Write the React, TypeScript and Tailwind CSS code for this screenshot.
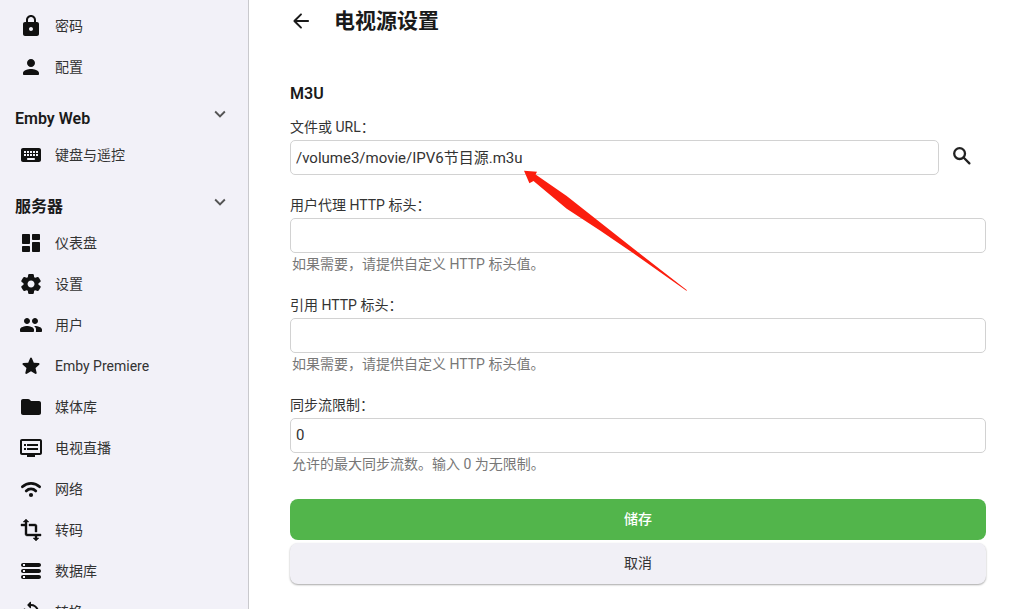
import type { ReactNode } from "react";
import { MdDvr, MdExpandMore } from "react-icons/md";

function Glyph({ children }: { children: ReactNode }) {
  return (
    <svg viewBox="0 0 24 24" className="size-6 shrink-0 fill-current" aria-hidden="true">
      {children}
    </svg>
  );
}

const syncArc =
  "M12 4V2.21c0-.45-.54-.67-.85-.35l-2.8 2.79c-.2.2-.2.51 0 .71l2.79 2.79c.32.31.86.09.86-.36V6c3.31 0 6 2.69 6 6 0 .79-.15 1.56-.44 2.25-.15.36-.04.77.23 1.04.51.51 1.37.33 1.64-.34.37-.91.57-1.91.57-2.95 0-4.42-3.58-8-8-8z";

const icons = {
  lock: <path d="M18 8h-1V6c0-2.76-2.24-5-5-5S7 3.24 7 6v2H6c-1.1 0-2 .9-2 2v10c0 1.1.9 2 2 2h12c1.1 0 2-.9 2-2V10c0-1.1-.9-2-2-2zm-6 9c-1.1 0-2-.9-2-2s.9-2 2-2 2 .9 2 2-.9 2-2 2zM9 8V6c0-1.66 1.34-3 3-3s3 1.34 3 3v2H9z" />,
  person: <path d="M12 12c2.21 0 4-1.79 4-4s-1.79-4-4-4-4 1.79-4 4 1.79 4 4 4zm0 2c-2.67 0-8 1.34-8 4v1c0 .55.45 1 1 1h14c.55 0 1-.45 1-1v-1c0-2.66-5.33-4-8-4z" />,
  keyboard: <path d="M20 5H4c-1.1 0-1.99.9-1.99 2L2 17c0 1.1.9 2 2 2h16c1.1 0 2-.9 2-2V7c0-1.1-.9-2-2-2zm-9 3h2v2h-2V8zm0 3h2v2h-2v-2zM8 8h2v2H8V8zm0 3h2v2H8v-2zm-1 2H5v-2h2v2zm0-3H5V8h2v2zm8 7H9c-.55 0-1-.45-1-1s.45-1 1-1h6c.55 0 1 .45 1 1s-.45 1-1 1zm1-4h-2v-2h2v2zm0-3h-2V8h2v2zm3 3h-2v-2h2v2zm0-3h-2V8h2v2z" />,
  dashboard: <path d="M4 13h6c.55 0 1-.45 1-1V4c0-.55-.45-1-1-1H4c-.55 0-1 .45-1 1v8c0 .55.45 1 1 1zm0 8h6c.55 0 1-.45 1-1v-4c0-.55-.45-1-1-1H4c-.55 0-1 .45-1 1v4c0 .55.45 1 1 1zm10 0h6c.55 0 1-.45 1-1v-8c0-.55-.45-1-1-1h-6c-.55 0-1 .45-1 1v8c0 .55.45 1 1 1zM13 4v4c0 .55.45 1 1 1h6c.55 0 1-.45 1-1V4c0-.55-.45-1-1-1h-6c-.55 0-1 .45-1 1z" />,
  settings: <path d="M19.5 12c0-.23-.01-.45-.03-.68l1.86-1.41c.4-.3.51-.86.26-1.3l-1.87-3.23c-.25-.44-.79-.62-1.25-.42l-2.15.91c-.37-.26-.76-.49-1.17-.68l-.29-2.31c-.06-.5-.49-.88-.99-.88h-3.73c-.51 0-.94.38-1 .88l-.29 2.31c-.41.19-.8.42-1.17.68l-2.15-.91c-.46-.2-1-.02-1.25.42L2.41 8.62c-.25.44-.14.99.26 1.3l1.86 1.41c-.02.22-.03.44-.03.67s.01.45.03.68l-1.86 1.41c-.4.3-.51.86-.26 1.3l1.87 3.23c.25.44.79.62 1.25.42l2.15-.91c.37.26.76.49 1.17.68l.29 2.31c.06.5.49.88.99.88h3.73c.5 0 .93-.38.99-.88l.29-2.31c.41-.19.8-.42 1.17-.68l2.15.91c.46.2 1 .02 1.25-.42l1.87-3.23c.25-.44.14-.99-.26-1.3l-1.86-1.41c.03-.23.04-.45.04-.68zm-7.46 3.5c-1.93 0-3.5-1.57-3.5-3.5s1.57-3.5 3.5-3.5 3.5 1.57 3.5 3.5-1.57 3.5-3.5 3.5z" />,
  people: <path d="M16 11c1.66 0 2.99-1.34 2.99-3S17.66 5 16 5s-3 1.34-3 3 1.34 3 3 3zm-8 0c1.66 0 2.99-1.34 2.99-3S9.66 5 8 5 5 6.34 5 8s1.34 3 3 3zm0 2c-2.33 0-7 1.17-7 3.5V18c0 .55.45 1 1 1h12c.55 0 1-.45 1-1v-1.5c0-2.33-4.67-3.5-7-3.5zm8 0c-.29 0-.62.02-.97.05.02.01.03.03.04.04 1.14.83 1.93 1.94 1.93 3.41V18c0 .35-.07.69-.18 1H22c.55 0 1-.45 1-1v-1.5c0-2.33-4.67-3.5-7-3.5z" />,
  star: <path d="M12 17.27l4.15 2.51c.76.46 1.69-.22 1.49-1.08l-1.1-4.72 3.67-3.18c.67-.58.31-1.68-.57-1.75l-4.83-.41-1.89-4.46c-.34-.81-1.5-.81-1.84 0L9.19 8.63l-4.83.41c-.88.07-1.24 1.17-.57 1.75l3.67 3.18-1.1 4.72c-.2.86.73 1.54 1.49 1.08l4.15-2.5z" />,
  folder: <path d="M10.59 4.59C10.21 4.21 9.7 4 9.17 4H4c-1.1 0-1.99.9-1.99 2L2 18c0 1.1.9 2 2 2h16c1.1 0 2-.9 2-2V8c0-1.1-.9-2-2-2h-8l-1.41-1.41z" />,
  wifi: (
    <>
      <path d="M3.4 9.8a12.4 12.4 0 0 1 17.2 0M7.2 13.9a6.9 6.9 0 0 1 9.6 0" fill="none" stroke="currentColor" strokeWidth="2.8" strokeLinecap="round" />
      <circle cx="12" cy="18" r="2.1" />
    </>
  ),
  transform: <path stroke="currentColor" strokeWidth="0.4" strokeLinejoin="round" d="M22 18v-2H8V4h2L7 1 4 4h2v2H2v2h4v8c0 1.1.9 2 2 2h8v2h-2l3 3 3-3h-2v-2h4zM10 8h6v6h2V8c0-1.1-.9-2-2-2h-6v2z" />,
  storage: <path d="M4 20h16c1.1 0 2-.9 2-2s-.9-2-2-2H4c-1.1 0-2 .9-2 2s.9 2 2 2zm0-3h2v2H4v-2zM2 6c0 1.1.9 2 2 2h16c1.1 0 2-.9 2-2s-.9-2-2-2H4c-1.1 0-2 .9-2 2zm4 1H4V5h2v2zm-2 7h16c1.1 0 2-.9 2-2s-.9-2-2-2H4c-1.1 0-2 .9-2 2s.9 2 2 2zm0-3h2v2H4v-2z" />,
  sync: (
    <>
      <path d={syncArc} />
      <path transform="rotate(180 12 12)" d={syncArc} />
    </>
  ),
  back: <path d="M19 11H7.83l4.88-4.88c.39-.39.39-1.03 0-1.42-.39-.39-1.02-.39-1.41 0l-6.59 6.59c-.39.39-.39 1.02 0 1.41l6.59 6.59c.39.39 1.02.39 1.41 0 .39-.39.39-1.02 0-1.41L7.83 13H19c.55 0 1-.45 1-1s-.45-1-1-1z" />,
  search: (
    <g fill="none" stroke="currentColor" strokeWidth="2.3" strokeLinecap="round">
      <circle cx="9.6" cy="9.6" r="5.4" />
      <path d="M13.8 13.8 19.4 19.4" />
    </g>
  ),
};

function NavItem({ icon, children }: { icon: ReactNode; children: ReactNode }) {
  return (
    <li>
      <a href="#" className="flex h-[41px] items-center gap-3 pl-[19px] text-sm text-[#333]">
        <span className="text-[#111]">{icon}</span>
        {children}
      </a>
    </li>
  );
}

function NavSection({ title, children }: { title: string; children: ReactNode }) {
  return (
    <section>
      <button type="button" className="flex h-[47px] w-full items-start justify-between pt-3 pr-[17px] pl-[15px] text-left">
        <span className="pt-2 text-base leading-6 font-semibold text-[#1a1a1a]">{title}</span>
        <MdExpandMore className="mt-1 size-[22px] text-[#555]" aria-hidden="true" />
      </button>
      <ul>{children}</ul>
    </section>
  );
}

const inputClass =
  "h-[35px] w-full min-w-0 rounded-[5px] border border-[#d2d2d2] bg-white px-[5px] pb-0.5 text-[15px] text-[#333] outline-none";

function Field({ id, label, value, help, action }: { id: string; label: string; value?: string; help?: string; action?: ReactNode }) {
  return (
    <div>
      <label htmlFor={id} className="block h-[23px] text-sm leading-5 text-[#333]">
        {label}
      </label>
      <div className="flex items-center">
        <input id={id} type="text" defaultValue={value} className={inputClass} />
        {action}
      </div>
      {help && <p className="h-[22px] pt-px pl-0.5 text-sm leading-5 text-[#777]">{help}</p>}
    </div>
  );
}

export default function App() {
  return (
    <div className="flex h-screen bg-white font-[Roboto,'Noto_Sans_CJK_SC',sans-serif]">
      <nav className="w-[249px] shrink-0 overflow-hidden border-r border-[#c9c9cd] bg-[#f2f1f8] pt-[5px]">
        <ul>
          <NavItem icon={<Glyph>{icons.lock}</Glyph>}>密码</NavItem>
          <NavItem icon={<Glyph>{icons.person}</Glyph>}>配置</NavItem>
        </ul>
        <NavSection title="Emby Web">
          <NavItem icon={<Glyph>{icons.keyboard}</Glyph>}>键盘与遥控</NavItem>
        </NavSection>
        <NavSection title="服务器">
          <NavItem icon={<Glyph>{icons.dashboard}</Glyph>}>仪表盘</NavItem>
          <NavItem icon={<Glyph>{icons.settings}</Glyph>}>设置</NavItem>
          <NavItem icon={<Glyph>{icons.people}</Glyph>}>用户</NavItem>
          <NavItem icon={<Glyph>{icons.star}</Glyph>}>Emby Premiere</NavItem>
          <NavItem icon={<Glyph>{icons.folder}</Glyph>}>媒体库</NavItem>
          <NavItem icon={<MdDvr className="size-6" />}>电视直播</NavItem>
          <NavItem icon={<Glyph>{icons.wifi}</Glyph>}>网络</NavItem>
          <NavItem icon={<Glyph>{icons.transform}</Glyph>}>转码</NavItem>
          <NavItem icon={<Glyph>{icons.storage}</Glyph>}>数据库</NavItem>
          <NavItem icon={<Glyph>{icons.sync}</Glyph>}>转换</NavItem>
        </NavSection>
      </nav>

      <main className="relative min-w-0 flex-1 overflow-hidden pr-[38px] pl-[41px]">
        <header className="flex h-[42px] items-center gap-[21px] text-[#1a1a1a]">
          <button type="button" aria-label="返回" className="-ml-px">
            <Glyph>{icons.back}</Glyph>
          </button>
          <h1 className="text-[21px] leading-8 font-bold">电视源设置</h1>
        </header>

        <form className="pt-10" onSubmit={(event) => event.preventDefault()}>
          <h2 className="text-base leading-6 font-semibold text-[#1a1a1a]">M3U</h2>
          <div className="flex flex-col gap-5 pt-[11px]">
            <Field
              id="source"
              label="文件或 URL："
              value="/volume3/movie/IPV6节目源.m3u"
              action={
                <button type="button" aria-label="浏览" className="shrink-0 pr-3 pb-1 pl-[11px] text-[#222]">
                  <Glyph>{icons.search}</Glyph>
                </button>
              }
            />
            <Field id="agent" label="用户代理 HTTP 标头：" help="如果需要，请提供自定义 HTTP 标头值。" />
            <Field id="referrer" label="引用 HTTP 标头：" help="如果需要，请提供自定义 HTTP 标头值。" />
            <Field id="limit" label="同步流限制：" value="0" help="允许的最大同步流数。输入 0 为无限制。" />
          </div>
          <div className="flex flex-col gap-[3px] pt-6 text-sm">
            <button type="submit" className="h-[41px] rounded-lg bg-[#52b54b] pb-0.5 font-medium text-white">
              储存
            </button>
            <button type="button" className="h-[41px] rounded-lg bg-[#f1f0f6] pb-0.5 text-[#333] shadow-[0_1px_2px_rgba(0,0,0,0.35)]">
              取消
            </button>
          </div>
        </form>

        <svg viewBox="0 0 164 121" className="pointer-events-none absolute top-[170px] left-[275px] h-[121px] w-[164px]" aria-hidden="true">
          <path d="M0 .8 13 1.8 11.6 4.6 42.7 26 76 52.2 109 78.3 163 120.2 162.4 120.8 109 83 76 60.5 42.7 38.8 9.5 11 5.4 13.2Z" fill="#fb1d0e" />
        </svg>
      </main>
    </div>
  );
}
